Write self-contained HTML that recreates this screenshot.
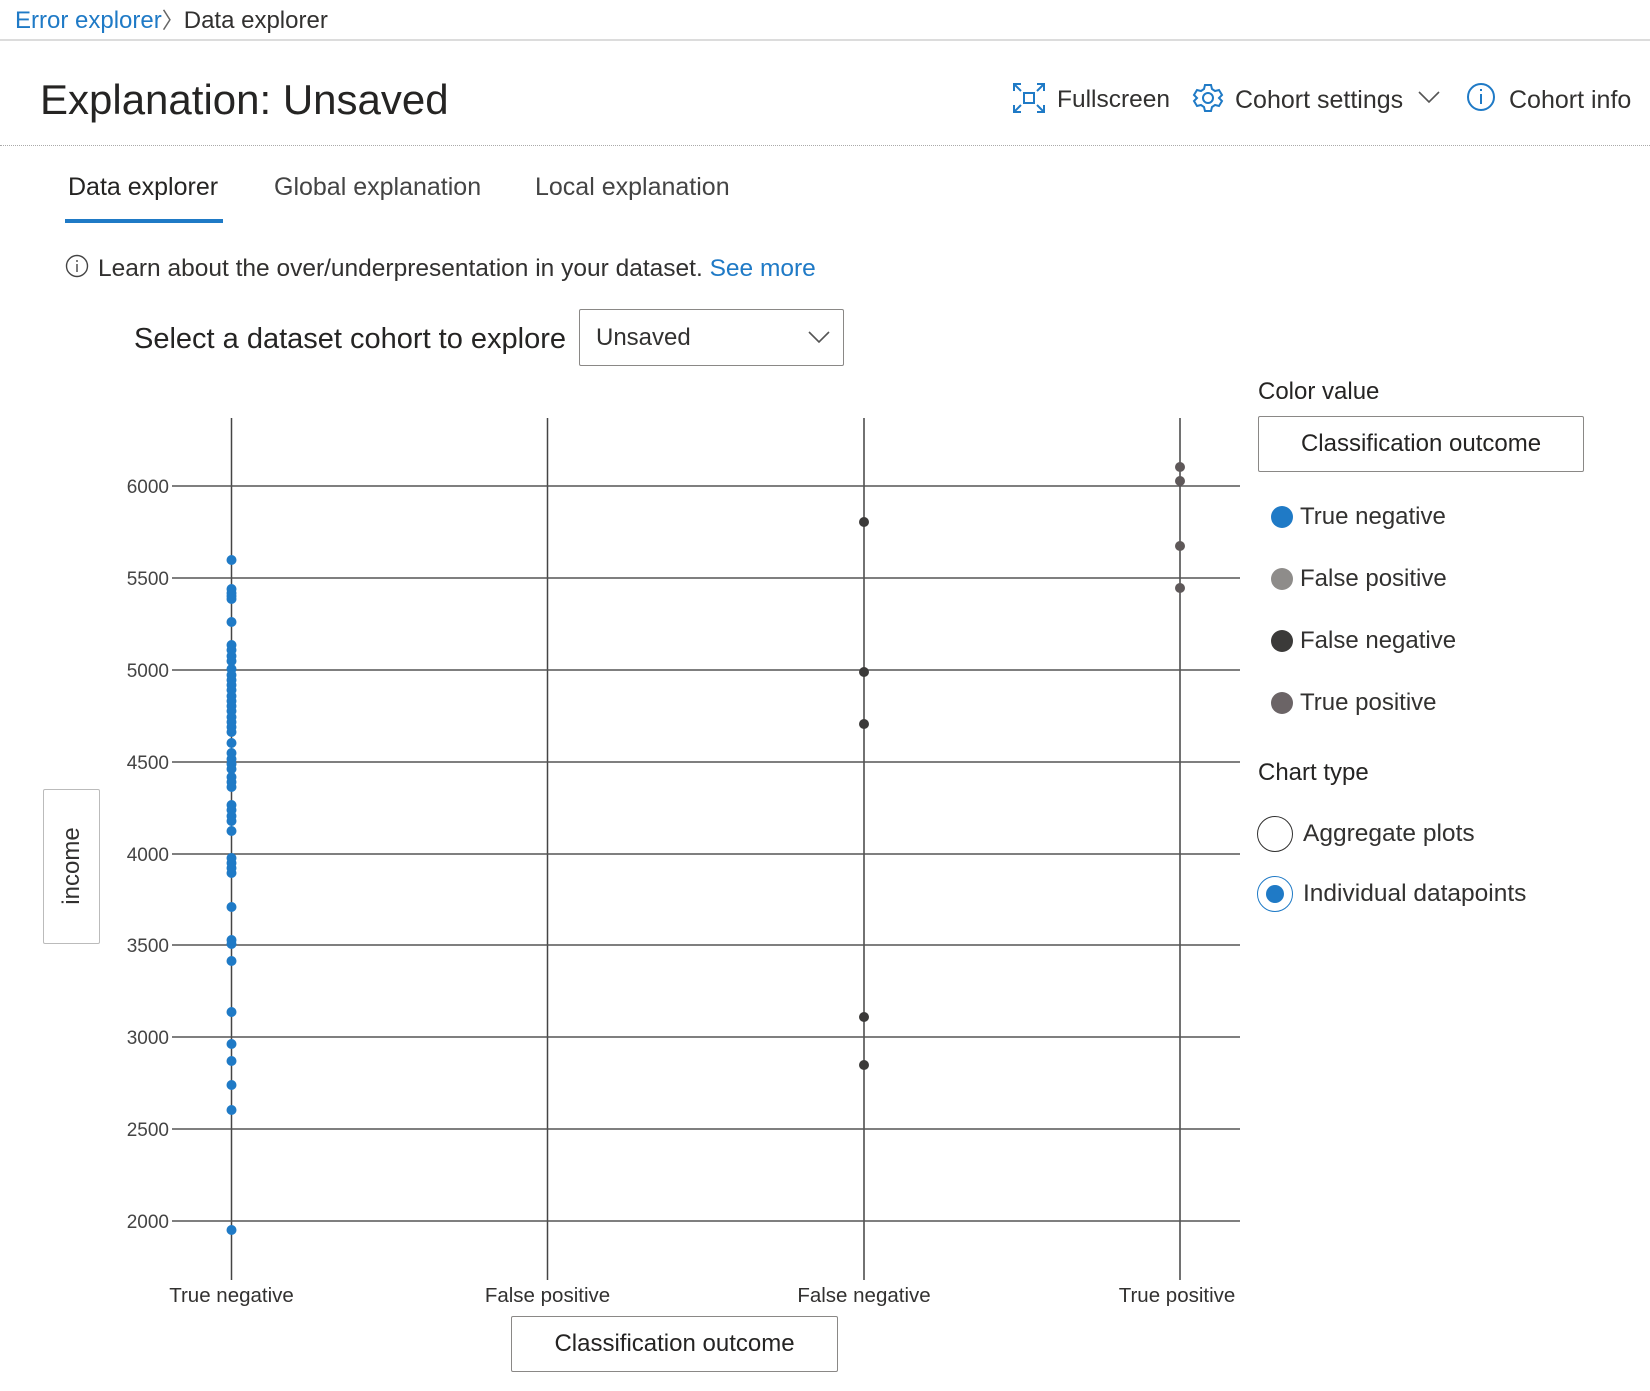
<!DOCTYPE html>
<html><head><meta charset="utf-8"><style>
*{margin:0;padding:0;box-sizing:border-box}
body{width:1650px;height:1391px;background:#fff;font-family:"Liberation Sans",sans-serif;color:#323130;position:relative;overflow:hidden}
.a{position:absolute;white-space:nowrap}
</style></head><body>
<div class="a" style="left:15px;top:6px;font-size:24px;line-height:30px"><span style="color:#1f7ac6">Error explorer</span><span style="color:#666;font-size:22px">〉</span>Data explorer</div>
<div class="a" style="left:0;top:39px;width:1650px;height:2px;background:#dcdcdc"></div>
<div class="a" style="left:40px;top:74px;font-size:42px;line-height:52px;color:#252423">Explanation: Unsaved</div>
<svg class="a" style="left:1012px;top:82px" width="34" height="32" viewBox="0 0 34 32" fill="none" stroke="#1f7ac6" stroke-width="2"><path d="M2 9V2h7M2 2l7 7M32 9V2h-7M32 2l-7 7M2 23v7h7M2 30l7-7M32 23v7h-7M32 30l-7-7"/><rect x="12" y="11" width="10" height="10"/></svg>
<div class="a" style="left:1057px;top:84px;font-size:24.5px;line-height:32px">Fullscreen</div>
<svg class="a" style="left:1192px;top:82px" width="32" height="32" viewBox="0 0 32 32" fill="none" stroke="#1f7ac6" stroke-width="2"><path d="M13 3h6l1 4 3 2 4-1 3 5-3 3v0l3 3-3 5-4-1-3 2-1 4h-6l-1-4-3-2-4 1-3-5 3-3-3-3 3-5 4 1 3-2z"/><circle cx="16" cy="16" r="5"/></svg>
<div class="a" style="left:1235px;top:84px;font-size:25px;line-height:32px">Cohort settings</div>
<svg class="a" style="left:1418px;top:90px" width="22" height="14" viewBox="0 0 22 14" fill="none" stroke="#555" stroke-width="1.6"><path d="M1 2l10 10 10-10"/></svg>
<svg class="a" style="left:1466px;top:82px" width="30" height="30" viewBox="0 0 30 30" fill="none" stroke="#1f7ac6" stroke-width="2"><circle cx="15" cy="15" r="13"/><path d="M15 12v10M15 7v2"/></svg>
<div class="a" style="left:1509px;top:84px;font-size:25px;line-height:32px">Cohort info</div>
<div class="a" style="left:0;top:145px;width:1650px;border-top:1px dotted #aaa"></div>
<div class="a" style="left:68px;top:171px;font-size:25px;line-height:32px;color:#252423">Data explorer</div>
<div class="a" style="left:274px;top:171px;font-size:25px;line-height:32px;color:#444">Global explanation</div>
<div class="a" style="left:535px;top:171px;font-size:25px;line-height:32px;color:#444">Local explanation</div>
<div class="a" style="left:65px;top:219px;width:158px;height:4px;background:#1f7ac6"></div>
<svg class="a" style="left:65px;top:254px" width="24" height="24" viewBox="0 0 24 24" fill="none" stroke="#444" stroke-width="1.4"><circle cx="12" cy="12" r="10.5"/><path d="M12 10v8M12 6v2"/></svg>
<div class="a" style="left:98px;top:254px;font-size:24.5px;line-height:30px">Learn about the over/underpresentation in your dataset. <span style="color:#1f7ac6">See more</span></div>
<div class="a" style="left:134px;top:322px;font-size:29px;line-height:34px;color:#252423">Select a dataset cohort to explore</div>
<div class="a" style="left:579px;top:309px;width:265px;height:57px;border:1px solid #8a8886;border-radius:2px"></div>
<div class="a" style="left:596px;top:323px;font-size:24px;line-height:30px">Unsaved</div>
<svg class="a" style="left:808px;top:330px" width="22" height="14" viewBox="0 0 22 14" fill="none" stroke="#555" stroke-width="1.6"><path d="M1 2l10 10 10-10"/></svg>

<div class="a" style="left:1258px;top:377px;font-size:24px;line-height:30px;color:#252423">Color value</div>
<div class="a" style="left:1258px;top:416px;width:326px;height:56px;border:1px solid #8a8886;border-radius:2px;font-size:24px;line-height:54px;text-align:center;color:#252423">Classification outcome</div>
<div class="a" style="left:1271px;top:506px;width:22px;height:22px;border-radius:50%;background:#1f7ac6"></div>
<div class="a" style="left:1300px;top:502px;font-size:24px;line-height:30px">True negative</div>
<div class="a" style="left:1271px;top:568px;width:22px;height:22px;border-radius:50%;background:#8e8c8a"></div>
<div class="a" style="left:1300px;top:564px;font-size:24px;line-height:30px">False positive</div>
<div class="a" style="left:1271px;top:630px;width:22px;height:22px;border-radius:50%;background:#3b3a39"></div>
<div class="a" style="left:1300px;top:626px;font-size:24px;line-height:30px">False negative</div>
<div class="a" style="left:1271px;top:692px;width:22px;height:22px;border-radius:50%;background:#6b6466"></div>
<div class="a" style="left:1300px;top:688px;font-size:24px;line-height:30px">True positive</div>
<div class="a" style="left:1258px;top:758px;font-size:24px;line-height:30px;color:#252423">Chart type</div>
<div class="a" style="left:1257px;top:816px;width:36px;height:36px;border-radius:50%;border:1.5px solid #323130"></div>
<div class="a" style="left:1303px;top:819px;font-size:24.5px;line-height:30px">Aggregate plots</div>
<div class="a" style="left:1257px;top:876px;width:36px;height:36px;border-radius:50%;border:1.5px solid #1f7ac6"></div>
<div class="a" style="left:1266px;top:885px;width:18px;height:18px;border-radius:50%;background:#1f7ac6"></div>
<div class="a" style="left:1303px;top:879px;font-size:24.5px;line-height:30px">Individual datapoints</div>

<div class="a" style="left:43px;top:789px;width:57px;height:155px;border:1px solid #bbb;border-radius:2px"></div>
<div class="a" style="left:72px;top:866px;font-size:24px;line-height:30px;transform:translate(-50%,-50%) rotate(-90deg)">income</div>

<svg class="a" style="left:0;top:0" width="1650" height="1391">
<g stroke="#444" stroke-width="1.5">
<line x1="231.5" y1="418" x2="231.5" y2="1280"/><line x1="547.5" y1="418" x2="547.5" y2="1280"/><line x1="864" y1="418" x2="864" y2="1280"/><line x1="1180" y1="418" x2="1180" y2="1280"/>
</g>
<g stroke="#555" stroke-width="1.5">
<line x1="172" x2="1240" y1="486" y2="486"/><line x1="172" x2="1240" y1="578" y2="578"/><line x1="172" x2="1240" y1="670" y2="670"/><line x1="172" x2="1240" y1="762" y2="762"/><line x1="172" x2="1240" y1="854" y2="854"/><line x1="172" x2="1240" y1="945" y2="945"/><line x1="172" x2="1240" y1="1037" y2="1037"/><line x1="172" x2="1240" y1="1129" y2="1129"/><line x1="172" x2="1240" y1="1221" y2="1221"/>
</g>
<g font-family="Liberation Sans,sans-serif" font-size="19" fill="#444" text-anchor="end">
<text x="169" y="493">6000</text><text x="169" y="585">5500</text><text x="169" y="677">5000</text><text x="169" y="769">4500</text><text x="169" y="861">4000</text><text x="169" y="952">3500</text><text x="169" y="1044">3000</text><text x="169" y="1136">2500</text><text x="169" y="1228">2000</text>
</g>
<g font-family="Liberation Sans,sans-serif" font-size="20.5" fill="#323130" text-anchor="middle">
<text x="231.5" y="1302">True negative</text><text x="547.5" y="1302">False positive</text><text x="864" y="1302">False negative</text><text x="1177" y="1302">True positive</text>
</g>
<g fill="#1f7ac6">
<circle cx="231.5" cy="560" r="5"/><circle cx="231.5" cy="589" r="5"/><circle cx="231.5" cy="593" r="5"/><circle cx="231.5" cy="596" r="5"/><circle cx="231.5" cy="599" r="5"/><circle cx="231.5" cy="622" r="5"/><circle cx="231.5" cy="645" r="5"/><circle cx="231.5" cy="650" r="5"/><circle cx="231.5" cy="656" r="5"/><circle cx="231.5" cy="661" r="5"/><circle cx="231.5" cy="669" r="5"/><circle cx="231.5" cy="675" r="5"/><circle cx="231.5" cy="680" r="5"/><circle cx="231.5" cy="685" r="5"/><circle cx="231.5" cy="690" r="5"/><circle cx="231.5" cy="696" r="5"/><circle cx="231.5" cy="701" r="5"/><circle cx="231.5" cy="706" r="5"/><circle cx="231.5" cy="711" r="5"/><circle cx="231.5" cy="717" r="5"/><circle cx="231.5" cy="722" r="5"/><circle cx="231.5" cy="727" r="5"/><circle cx="231.5" cy="732" r="5"/><circle cx="231.5" cy="743" r="5"/><circle cx="231.5" cy="753" r="5"/><circle cx="231.5" cy="759" r="5"/><circle cx="231.5" cy="764" r="5"/><circle cx="231.5" cy="769" r="5"/><circle cx="231.5" cy="777" r="5"/><circle cx="231.5" cy="782" r="5"/><circle cx="231.5" cy="787" r="5"/><circle cx="231.5" cy="805" r="5"/><circle cx="231.5" cy="810" r="5"/><circle cx="231.5" cy="816" r="5"/><circle cx="231.5" cy="821" r="5"/><circle cx="231.5" cy="831" r="5"/><circle cx="231.5" cy="858" r="5"/><circle cx="231.5" cy="863" r="5"/><circle cx="231.5" cy="868" r="5"/><circle cx="231.5" cy="873" r="5"/><circle cx="231.5" cy="907" r="5"/><circle cx="231.5" cy="940" r="5"/><circle cx="231.5" cy="944" r="5"/><circle cx="231.5" cy="961" r="5"/><circle cx="231.5" cy="1012" r="5"/><circle cx="231.5" cy="1044" r="5"/><circle cx="231.5" cy="1061" r="5"/><circle cx="231.5" cy="1085" r="5"/><circle cx="231.5" cy="1110" r="5"/><circle cx="231.5" cy="1230" r="5"/>
</g>
<g fill="#3b3a39"><circle cx="864" cy="522" r="5"/><circle cx="864" cy="672" r="5"/><circle cx="864" cy="724" r="5"/><circle cx="864" cy="1017" r="5"/><circle cx="864" cy="1065" r="5"/></g>
<g fill="#5e5859"><circle cx="1180" cy="467" r="5"/><circle cx="1180" cy="481" r="5"/><circle cx="1180" cy="546" r="5"/><circle cx="1180" cy="588" r="5"/></g>
</svg>
<div class="a" style="left:511px;top:1316px;width:327px;height:56px;border:1px solid #8a8886;border-radius:2px;font-size:24px;line-height:54px;text-align:center;color:#252423">Classification outcome</div>
</body></html>
